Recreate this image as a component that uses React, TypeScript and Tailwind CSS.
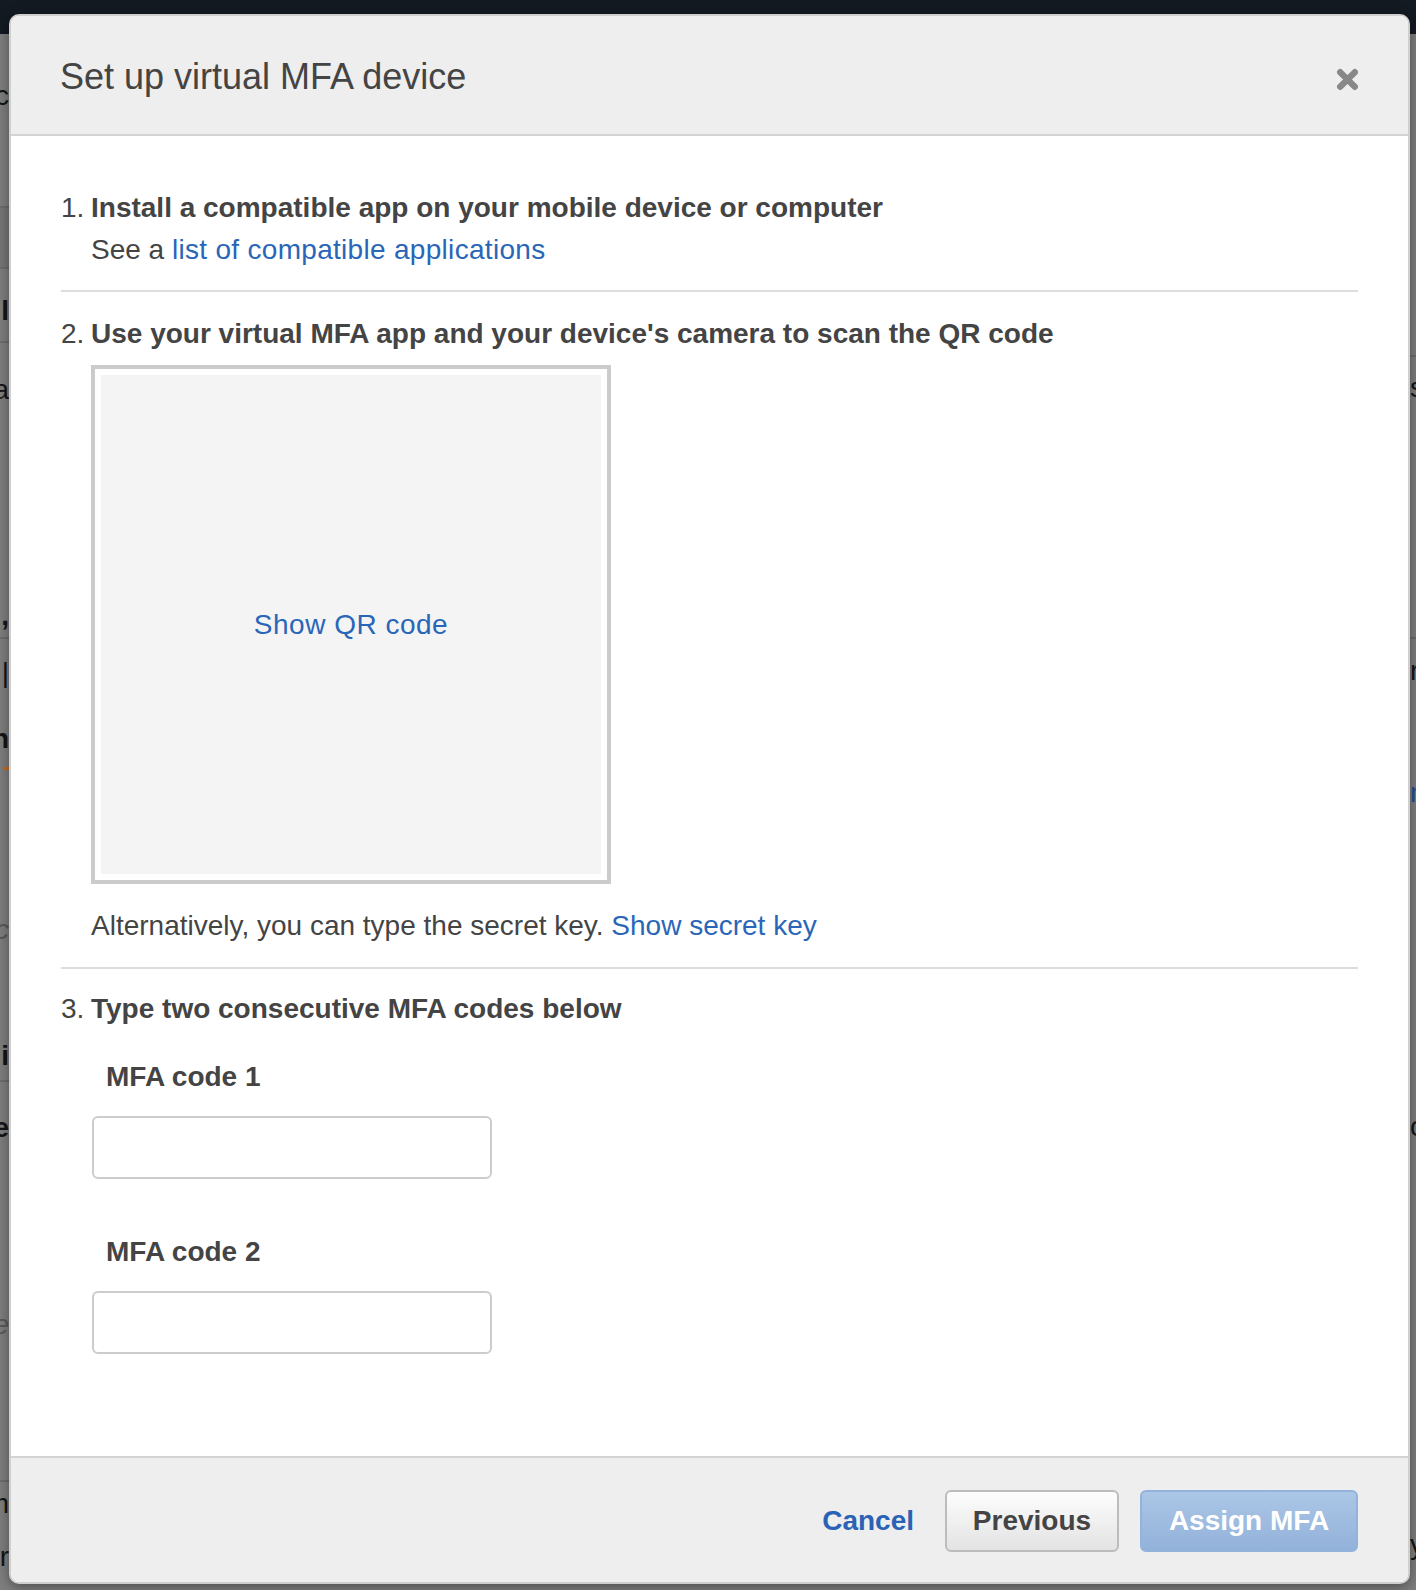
import React from 'react'

// backdrop behind the modal: dark nav bar + dimmed page edges
function Backdrop() {
  return (
    <div className="flex h-full flex-col">
      <div className="h-[34px] shrink-0 bg-[#131a22]" />
      <div className="flex flex-1 justify-between">
        {/* left edge of the page, mostly hidden by the dialog */}
        <div className="flex w-[9px] flex-col overflow-hidden text-[28px] leading-[28px] text-[#151515]">
          <div className="flex h-[172px] flex-col items-end">
            <span className="mt-[48px]">c</span>
          </div>
          <div className="h-[61px] border-t-2 border-[#6e6e6e] bg-[#777777]" />
          <div className="flex h-[74px] flex-col items-end border-t-2 border-[#6e6e6e]">
            <span className="mt-[28px] font-bold">l</span>
          </div>
          <div className="flex h-[296px] flex-col items-end border-t-2 border-[#6e6e6e]">
            <span className="mt-[33px]">a</span>
            <span className="mt-[198px] font-bold">,</span>
          </div>
          <div className="flex h-[443px] flex-col items-end border-t-2 border-[#6e6e6e]">
            <span className="mt-[20px]">|</span>
            <span className="mt-[38px] font-bold">h</span>
            <span className="mt-[14px] h-[3px] w-[6px] bg-[#c86a1e]" />
            <span className="mt-[146px] italic text-[#5a5a5a]">c</span>
            <span className="mt-[98px] font-bold">i</span>
          </div>
          <div className="flex h-[400px] flex-col items-end border-t-2 border-[#6e6e6e]">
            <span className="mt-[32px] font-bold">e</span>
            <span className="mt-[169px] italic text-[#5a5a5a]">e</span>
          </div>
          <div className="flex flex-1 flex-col items-end border-t-2 border-[#6e6e6e]">
            <span className="mt-[8px]">m</span>
            <span className="mt-[25px]">r</span>
          </div>
        </div>

        {/* right edge */}
        <div className="flex w-[6px] flex-col overflow-hidden text-[28px] leading-[28px] text-[#151515]">
          <div className="h-[321px]" />
          <div className="flex h-[282px] flex-col border-t-2 border-[#6e6e6e]">
            <span className="mt-[17px]">s</span>
          </div>
          <div className="flex h-[480px] flex-col border-t-2 border-[#6e6e6e]">
            <span className="mt-[18px]">r</span>
            <span className="mt-[94px] text-[#1f4f94]">n</span>
            <span className="mt-[306px]">c</span>
          </div>
          <div className="flex flex-1 flex-col">
            <span className="mt-[414px]">y</span>
          </div>
        </div>
      </div>
    </div>
  )
}

function CloseIcon() {
  return (
    <svg width="23" height="23" viewBox="0 0 22 22" className="block">
      <path d="M4 4 L18 18 M18 4 L4 18" stroke="#888888" strokeWidth="6" strokeLinecap="round" />
    </svg>
  )
}

function Step({ n, children }: { n: number; children: React.ReactNode }) {
  return (
    <div className="flex">
      <span className="w-[30px] shrink-0">{n}.</span>
      <div className="flex flex-col">{children}</div>
    </div>
  )
}

function CodeField({ label }: { label: string }) {
  return (
    <div className="flex flex-col">
      <label className="ml-[15px] font-bold">{label}</label>
      <input
        type="text"
        className="ml-[1px] mt-[18px] h-[63px] w-[400px] rounded-[6px] border-2 border-[#cccccc] bg-white px-3 outline-none"
      />
    </div>
  )
}

function MfaDialog() {
  return (
    <div className="absolute left-[9px] top-[14px] w-[1401px] overflow-hidden rounded-[10px] border-2 border-[#cfcfcf] bg-white shadow-[0_3px_14px_rgba(0,0,0,0.4)]">
      {/* header */}
      <div className="flex h-[120px] items-center justify-between border-b-2 border-[#d3d3d3] bg-[#eeeeee] px-[50px] pt-[4px]">
        <h1 className="ml-[-1px] text-[36px] font-normal text-[#444444]">Set up virtual MFA device</h1>
        <button className="mr-[-1px] mt-[4px]">
          <CloseIcon />
        </button>
      </div>

      {/* body */}
      <div className="px-[50px] pb-[102px] pt-[51px] text-[28px] leading-[42px] text-[#444444]">
        <Step n={1}>
          <div className="font-bold">Install a compatible app on your mobile device or computer</div>
          <div>
            See a <a className="tracking-[0.3px] text-[#2a66b8]">list of compatible applications</a>
          </div>
        </Step>

        <div className="mt-[19px] h-[2px] bg-[#dddddd]" />

        <div className="mt-[21px]">
          <Step n={2}>
            <div className="font-bold">Use your virtual MFA app and your device's camera to scan the QR code</div>
            <div className="mt-[10px] h-[519px] w-[520px] border-4 border-[#cbcbcb] bg-white p-[6px]">
              <div className="flex h-full items-center justify-center bg-[#f4f4f4]">
                <a className="tracking-[0.5px] text-[#2a66b8]">Show QR code</a>
              </div>
            </div>
            <div className="mt-[21px]">
              Alternatively, you can type the secret key. <a className="text-[#2a66b8]">Show secret key</a>
            </div>
          </Step>
        </div>

        <div className="mt-[20px] h-[2px] bg-[#dddddd]" />

        <div className="mt-[19px]">
          <Step n={3}>
            <div className="font-bold">Type two consecutive MFA codes below</div>
            <div className="mt-[26px]">
              <CodeField label="MFA code 1" />
            </div>
            <div className="mt-[52px]">
              <CodeField label="MFA code 2" />
            </div>
          </Step>
        </div>
      </div>

      {/* footer */}
      <div className="flex h-[126px] items-center justify-end border-t-2 border-[#d3d3d3] bg-[#eeeeee] px-[50px] pt-[1px] text-[28px] font-bold">
        <a className="text-[#2a63b5]">Cancel</a>
        <button className="ml-[31px] h-[62px] w-[174px] rounded-[6px] border-2 border-[#bcbcbc] bg-gradient-to-b from-[#fdfdfd] to-[#e3e3e3] text-[#444444]">
          Previous
        </button>
        <button className="ml-[21px] h-[62px] w-[218px] rounded-[6px] border-2 border-[#93b3dc] bg-gradient-to-b from-[#abc6e6] to-[#93b2da] text-white">
          Assign MFA
        </button>
      </div>
    </div>
  )
}

export default function App() {
  return (
    <div className="relative h-[1590px] w-[1416px] overflow-hidden bg-[#7f7f7f] font-['Liberation_Sans',Arial,sans-serif]">
      <Backdrop />
      <MfaDialog />
    </div>
  )
}
